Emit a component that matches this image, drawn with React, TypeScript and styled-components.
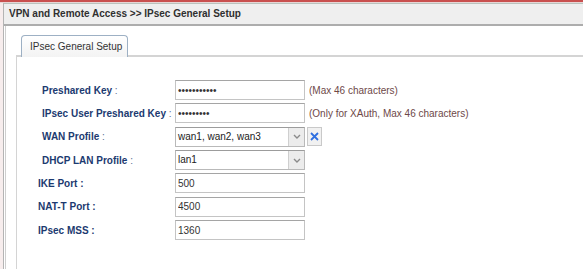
import styled, { createGlobalStyle } from 'styled-components';

const Global = createGlobalStyle`
  html, body {
    margin: 0;
    padding: 0;
    background: #f7eded;
    font-family: "Liberation Sans", Arial, sans-serif;
    overflow: hidden;
  }
`

type Row = {
  label: string
  kind: 'password' | 'text' | 'select' | 'multi'
  value: string
  hint?: string
  boldColon?: boolean
}

const rows: Row[] = [
  { label: 'Preshared Key', kind: 'password', value: '12345678901', hint: '(Max 46 characters)' },
  { label: 'IPsec User Preshared Key', kind: 'password', value: '123456789', hint: '(Only for XAuth, Max 46 characters)' },
  { label: 'WAN Profile', kind: 'multi', value: 'wan1, wan2, wan3' },
  { label: 'DHCP LAN Profile', kind: 'select', value: 'lan1' },
  { label: 'IKE Port', kind: 'text', value: '500', boldColon: true },
  { label: 'NAT-T Port', kind: 'text', value: '4500', boldColon: true },
  { label: 'IPsec MSS', kind: 'text', value: '1360', boldColon: true },
]

const Chevron = () => (
  <svg width="8" height="5" viewBox="0 0 8 5">
    <path d="M1 1 L4 4 L7 1" fill="none" stroke="#8a8a8a" strokeWidth="1.4" />
  </svg>
)

const Cross = () => (
  <svg width="9" height="9" viewBox="0 0 9 9">
    <path d="M1 1 L8 8 M8 1 L1 8" fill="none" stroke="#2f6fe0" strokeWidth="1.8" />
  </svg>
)

const App = () => {
  return (
    <Page>
      <Global />
      <TopLine />
      <Frame>
        <Header>VPN and Remote Access &gt;&gt; IPsec General Setup</Header>
        <Content>
          <TabBar>
            <Tab>IPsec General Setup</Tab>
          </TabBar>
          <Panel>
            <Form>
              {rows.map(r => (
                <FormRow key={r.label}>
                  <Label $bold={!!r.boldColon}>
                    {r.label}<Colon $bold={!!r.boldColon}> :</Colon>
                  </Label>
                  <Field>
                    {r.kind === 'password' && <TextInput type="password" value={r.value} readOnly />}
                    {r.kind === 'text' && <TextInput type="text" value={r.value} readOnly />}
                    {(r.kind === 'select' || r.kind === 'multi') && (
                      <SelectBox>
                        <SelectValue>{r.value}</SelectValue>
                        <ArrowBox><Chevron /></ArrowBox>
                      </SelectBox>
                    )}
                    {r.kind === 'multi' && <ClearButton><Cross /></ClearButton>}
                    {r.hint && <Hint>{r.hint}</Hint>}
                  </Field>
                </FormRow>
              ))}
            </Form>
          </Panel>
        </Content>
      </Frame>
    </Page>
  )
}

export default App

const Page = styled.div`
  width: 583px;
  height: 269px;
  overflow: hidden;
  display: flex;
  flex-direction: column;
`

const TopLine = styled.div`
  height: 2px;
  background: #c9504f;
  border-bottom: 1px solid #e7d6d6;
  flex-shrink: 0;
`

const Frame = styled.div`
  flex: 1;
  margin-left: 3px;
  border-left: 1px solid #b4b4b4;
  border-top: 1px solid #b9c3bd;
  background: #fff;
  display: flex;
  flex-direction: column;
`

const Header = styled.div`
  height: 20px;
  line-height: 20px;
  padding-left: 5px;
  background: #efefef;
  border-bottom: 2px solid #adadad;
  font-size: 10px;
  font-weight: bold;
  color: #303030;
  white-space: nowrap;
`

const Content = styled.div`
  flex: 1;
  margin-left: 1px;
  border-left: 1px solid #cfcfcf;
  padding: 9px 0 0 10px;
  display: flex;
  flex-direction: column;
`

const TabBar = styled.div`
  display: flex;
  padding-left: 5px;
  margin-bottom: -2px;
  position: relative;
  z-index: 1;
`

const Tab = styled.div`
  width: 107px;
  height: 22px;
  line-height: 21px;
  padding-left: 8px;
  box-sizing: border-box;
  border: 1px solid #9db0c4;
  border-bottom: none;
  border-radius: 4px 4px 0 0;
  background: linear-gradient(#ffffff, #f3f3f3);
  font-size: 10px;
  color: #333;
  white-space: nowrap;
`

const Panel = styled.div`
  flex: 1;
  border-left: 1px solid #d4d4d4;
  border-top: 2px solid #d4d4d4;
  background: #fff;
  padding: 23px 0 0 0;
`

const Form = styled.div`
  display: flex;
  flex-direction: column;
  gap: 3.35px;
`

const FormRow = styled.div`
  display: flex;
  align-items: center;
  height: 20px;
`

const Label = styled.div<{ $bold: boolean }>`
  width: 158px;
  padding-left: ${p => (p.$bold ? '21px' : '25px')};
  box-sizing: border-box;
  font-size: 10px;
  font-weight: bold;
  color: #1c3a70;
  white-space: nowrap;
`

const Colon = styled.span<{ $bold: boolean }>`
  font-weight: ${p => (p.$bold ? 'bold' : 'normal')};
  color: ${p => (p.$bold ? '#1c3a70' : '#5a6f93')};
`

const Field = styled.div`
  display: flex;
  align-items: center;
  gap: 2px;
`

const TextInput = styled.input`
  width: 130px;
  height: 20px;
  box-sizing: border-box;
  border: 1px solid #c4c4c4;
  border-top-color: #a5a5a5;
  padding: 0 2px;
  font-family: "Liberation Sans", Arial, sans-serif;
  font-size: 10px;
  color: #333;
  background: #fff;
  outline: none;
`

const SelectBox = styled.div`
  width: 130px;
  height: 20px;
  box-sizing: border-box;
  border: 1px solid #b9b9b9;
  border-top-color: #9c9c9c;
  display: flex;
  background: #fff;
`

const SelectValue = styled.div`
  flex: 1;
  padding-left: 2px;
  line-height: 18px;
  font-size: 10px;
  color: #222;
  white-space: nowrap;
  overflow: hidden;
`

const ArrowBox = styled.div`
  width: 15px;
  border-left: 1px solid #cfcfcf;
  background: #ececec;
  display: flex;
  align-items: center;
  justify-content: center;
`

const ClearButton = styled.div`
  width: 15px;
  height: 19px;
  box-sizing: border-box;
  border: 1px solid #c9c9c9;
  background: #f1f1f1;
  display: flex;
  align-items: center;
  justify-content: center;
`

const Hint = styled.span`
  margin-left: 2px;
  font-size: 10px;
  color: #6e4848;
  white-space: nowrap;
`
